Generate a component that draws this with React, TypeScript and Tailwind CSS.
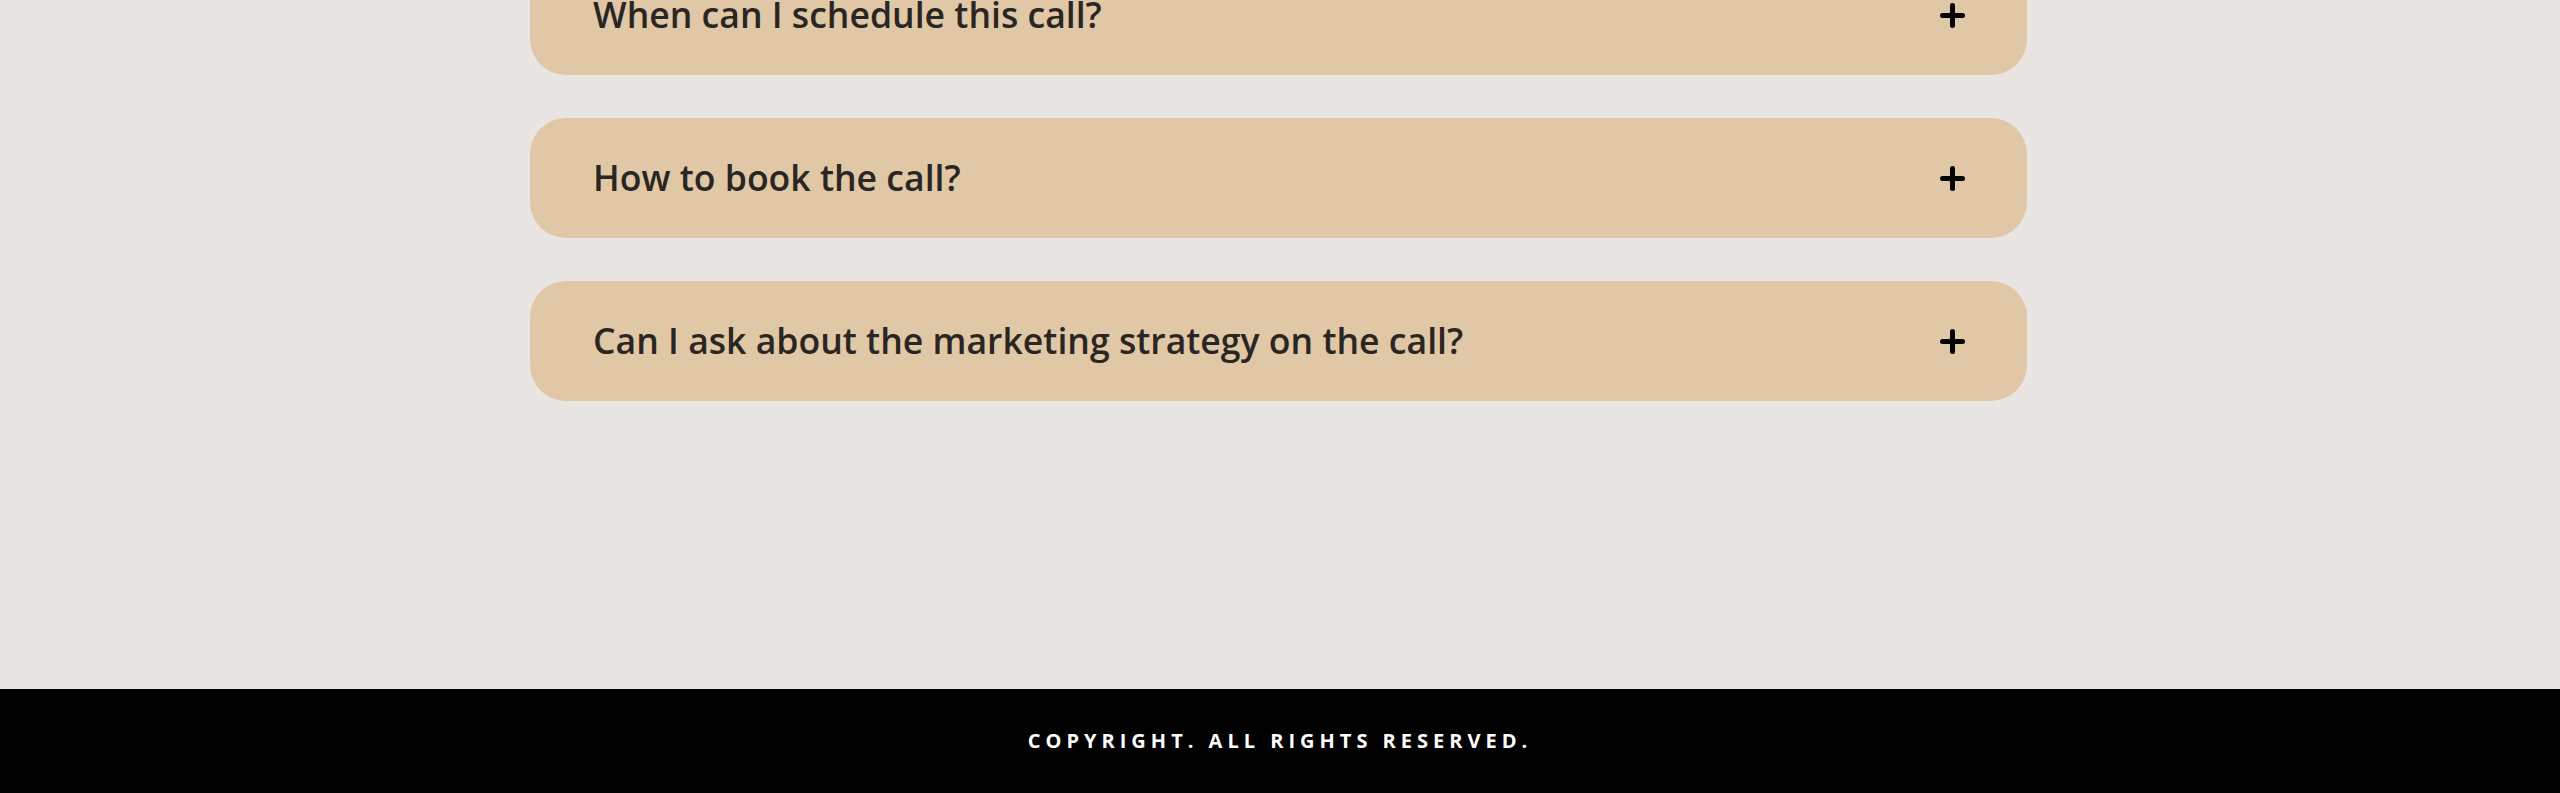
import { useState } from 'react';

const faqs = [
  'When can I schedule this call?',
  'How to book the call?',
  'Can I ask about the marketing strategy on the call?',
];

function PlusIcon() {
  return (
    <svg width="25" height="25" viewBox="0 0 25 25" className="flex-shrink-0">
      <line x1="12.5" y1="2.5" x2="12.5" y2="22.5" stroke="#000" strokeWidth="5" strokeLinecap="round" />
      <line x1="2.5" y1="12.5" x2="22.5" y2="12.5" stroke="#000" strokeWidth="5" strokeLinecap="round" />
    </svg>
  );
}

export default function App() {
  const [open, setOpen] = useState<number | null>(null);

  return (
    <div className="h-[793px] overflow-hidden flex flex-col bg-[#e9e5e3]" style={{ fontFamily: '"Open Sans", sans-serif' }}>
      {/* FAQ list */}
      <div className="flex-1">
        <div className="w-[1497px] ml-[530px] -mt-[45px] flex flex-col gap-[43px]">
          {faqs.map((q, i) => (
            <button
              key={q}
              onClick={() => setOpen(open === i ? null : i)}
              className="h-[120px] w-full flex items-center justify-between pl-[63px] pr-[62px] rounded-[36px] bg-[#e0c7a5] text-left cursor-pointer"
            >
              <span className="text-[35.6px] font-semibold text-[#2a2623] leading-none">{q}</span>
              <PlusIcon />
            </button>
          ))}
        </div>
      </div>

      {/* Footer */}
      <footer className="h-[104px] bg-black flex items-center justify-center">
        <p className="text-[20px] font-bold tracking-[5px] text-white uppercase">
          Copyright. All rights reserved.
        </p>
      </footer>
    </div>
  );
}
